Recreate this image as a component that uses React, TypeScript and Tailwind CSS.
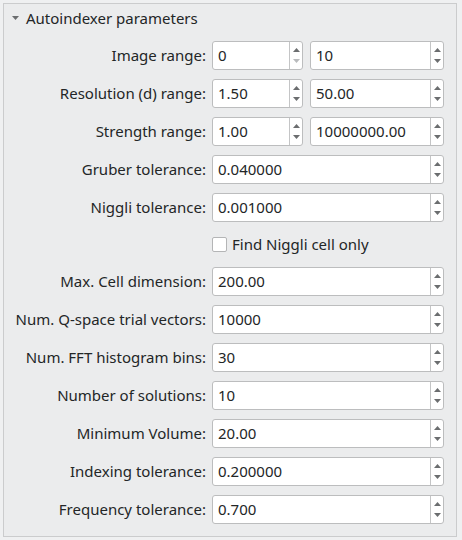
const font = { fontFamily: '"Noto Sans", "Open Sans", sans-serif' };

const Arrows = ({ downDisabled = false }: { downDisabled?: boolean }) => (
  <div className="flex w-[13px] flex-col items-center justify-between border-l border-[#c4c5c6] py-[6px]">
    <svg width="7" height="4" viewBox="0 0 7 4">
      <path d="M0 4 L3.5 0 L7 4 Z" fill="#6b6d6f" />
    </svg>
    <svg width="7" height="4" viewBox="0 0 7 4">
      <path d="M0 0 L3.5 4 L7 0 Z" fill={downDisabled ? "#b9bbbd" : "#6b6d6f"} />
    </svg>
  </div>
);

const SpinBox = ({
  value,
  width,
  downDisabled,
}: {
  value: string;
  width: string;
  downDisabled?: boolean;
}) => (
  <div
    className={`flex h-[29px] rounded-[3px] border border-[#bcbdbe] bg-white ${width}`}
  >
    <div className="flex flex-1 items-center pl-[5px] text-[15px] text-[#232627]">
      {value}
    </div>
    <Arrows downDisabled={downDisabled} />
  </div>
);

const Row = ({ label, children }: { label: string; children: React.ReactNode }) => (
  <div className="flex h-[29px] items-center">
    <div className="w-[202px] text-right text-[15px] text-[#232627]">{label}</div>
    <div className="ml-[6px] flex gap-[7px]">{children}</div>
  </div>
);

const singles: [string, string][] = [
  ["Max. Cell dimension:", "200.00"],
  ["Num. Q-space trial vectors:", "10000"],
  ["Num. FFT histogram bins:", "30"],
  ["Number of solutions:", "10"],
  ["Minimum Volume:", "20.00"],
  ["Indexing tolerance:", "0.200000"],
  ["Frequency tolerance:", "0.700"],
];

export default function App() {
  return (
    <div className="h-[540px] w-[462px] overflow-hidden bg-[#eff0f1] pt-[3px] pl-[3px]" style={font}>
      <div className="h-[534px] w-[454px] border border-[#cbcccd] bg-[#ebeced]">
        <div className="flex h-[28px] items-center pl-[8px] text-[15px] text-[#232627]">
          <svg width="7" height="4" viewBox="0 0 7 4" className="mr-[7px]">
            <path d="M0 0 L3.5 4 L7 0 Z" fill="#6b6d6f" />
          </svg>
          Autoindexer parameters
        </div>
        <div className="mt-[9px] flex flex-col gap-[9px]">
          <Row label="Image range:">
            <SpinBox value="0" width="w-[91px]" downDisabled />
            <SpinBox value="10" width="w-[134px]" />
          </Row>
          <Row label="Resolution (d) range:">
            <SpinBox value="1.50" width="w-[91px]" />
            <SpinBox value="50.00" width="w-[134px]" />
          </Row>
          <Row label="Strength range:">
            <SpinBox value="1.00" width="w-[91px]" />
            <SpinBox value="10000000.00" width="w-[134px]" />
          </Row>
          <Row label="Gruber tolerance:">
            <SpinBox value="0.040000" width="w-[232px]" />
          </Row>
          <Row label="Niggli tolerance:">
            <SpinBox value="0.001000" width="w-[232px]" />
          </Row>
          <div className="flex h-[27px] items-center pl-[208px]">
            <div className="h-[15px] w-[15px] rounded-[2px] border border-[#b4b5b6] bg-white" />
            <span className="ml-[5px] text-[15px] text-[#232627]">Find Niggli cell only</span>
          </div>
          {singles.map(([label, value]) => (
            <Row key={label} label={label}>
              <SpinBox value={value} width="w-[232px]" />
            </Row>
          ))}
        </div>
      </div>
    </div>
  );
}
